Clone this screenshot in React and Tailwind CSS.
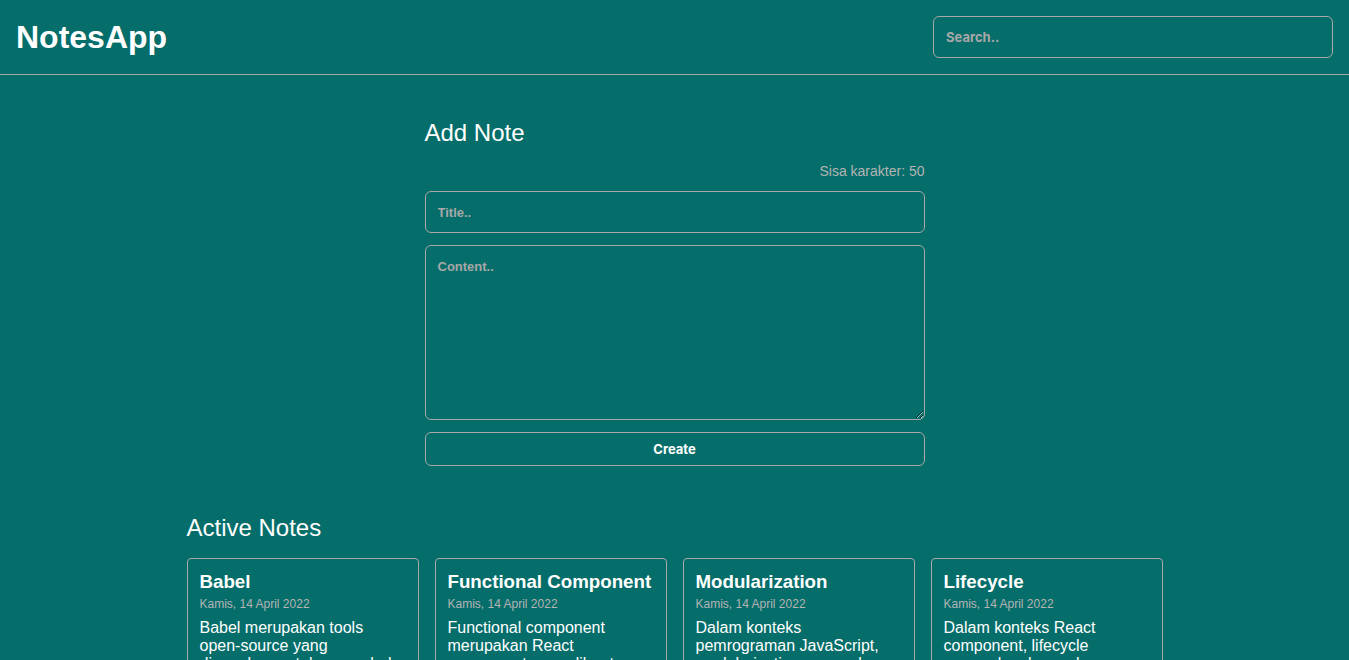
import React, { useState } from 'react';

const notes = [
  {
    id: 1,
    title: "Babel",
    date: "Kamis, 14 April 2022",
    body: "Babel merupakan tools open-source yang digunakan untuk mengubah sintaks ECMAScript 2015+ menjadi sintaks yang didukung oleh JavaScript engine versi lama.",
  },
  {
    id: 2,
    title: "Functional Component",
    date: "Kamis, 14 April 2022",
    body: "Functional component merupakan React component yang dibuat menggunakan fungsi JavaScript. Agar fungsi JavaScript dapat disebut component ia harus mengembalikan React element.",
  },
  {
    id: 3,
    title: "Modularization",
    date: "Kamis, 14 April 2022",
    body: "Dalam konteks pemrograman JavaScript, modularization merupakan teknik dalam memecah atau menggunakan kode dalam berkas JavaScript secara terpisah berdasarkan tanggung jawabnya masing-masing.",
  },
  {
    id: 4,
    title: "Lifecycle",
    date: "Kamis, 14 April 2022",
    body: "Dalam konteks React component, lifecycle merupakan kumpulan method yang menjadi siklus hidup mulai dari component dibuat (constructor), dirender (render), pasca-render (componentDidMount), dan seterusnya.",
  },
];

const App = () => {
  const [title, setTitle] = useState("");
  const [content, setContent] = useState("");
  const [search, setSearch] = useState("");

  const filtered = notes.filter(n => n.title.toLowerCase().includes(search.toLowerCase()));

  return (
    <div className="min-h-screen bg-[#056d6a] text-white font-['Liberation_Sans',Arial,sans-serif]">
      <header className="h-[75px] flex justify-between items-center px-4 border-b border-[#a8a8a8]">
        <h1 className="text-[32px] font-bold leading-none">NotesApp</h1>
        <input
          type="text"
          placeholder="Search.."
          value={search}
          onChange={(e) => setSearch(e.target.value)}
          className="w-[400px] h-[42px] px-3 bg-transparent border border-[#a8a8a8] rounded-[6px] text-[13px] font-bold font-['Inter',sans-serif] text-white placeholder:text-[#a8a8a8] outline-none"
        />
      </header>

      <main className="pt-[44px] pb-10">
        <section className="w-[500px] mx-auto flex flex-col">
          <h2 className="text-[24px] leading-[28px]">Add Note</h2>
          <p className="mt-4 text-right text-[14px] leading-4 text-[#b4b4b4]">Sisa karakter: {50 - title.length}</p>
          <input
            type="text"
            placeholder="Title.."
            value={title}
            maxLength={50}
            onChange={(e) => setTitle(e.target.value)}
            className="mt-3 h-[42px] px-3 bg-transparent border border-[#a8a8a8] rounded-[6px] text-[13px] font-bold text-white placeholder:text-[#a8a8a8] outline-none"
          />
          <textarea
            placeholder="Content.."
            value={content}
            onChange={(e) => setContent(e.target.value)}
            className="mt-3 h-[175px] px-3 py-[11px] bg-transparent border border-[#a8a8a8] rounded-[6px] text-[13px] font-bold text-white placeholder:text-[#a8a8a8] outline-none"
          />
          <button className="mt-3 h-[34px] pt-px border border-[#a8a8a8] rounded-[6px] text-[13px] font-bold font-['Inter',sans-serif] text-white cursor-pointer">
            Create
          </button>
        </section>

        <section className="w-[976px] mx-auto mt-12">
          <h2 className="text-[24px] leading-[28px]">Active Notes</h2>
          <div className="mt-4 grid grid-cols-4 gap-4">
            {filtered.map((note) => (
              <div key={note.id} className="border border-[#a8a8a8] rounded-[4px] px-3 pt-3 pb-3">
                <h3 className="text-[18.72px] leading-[22px] font-bold">{note.title}</h3>
                <p className="mt-1 text-[12px] leading-[14px] text-[#b4b4b4]">{note.date}</p>
                <p className="mt-2 text-[16px] leading-[18px]">{note.body}</p>
              </div>
            ))}
          </div>
        </section>
      </main>
    </div>
  );
};

export default App;
